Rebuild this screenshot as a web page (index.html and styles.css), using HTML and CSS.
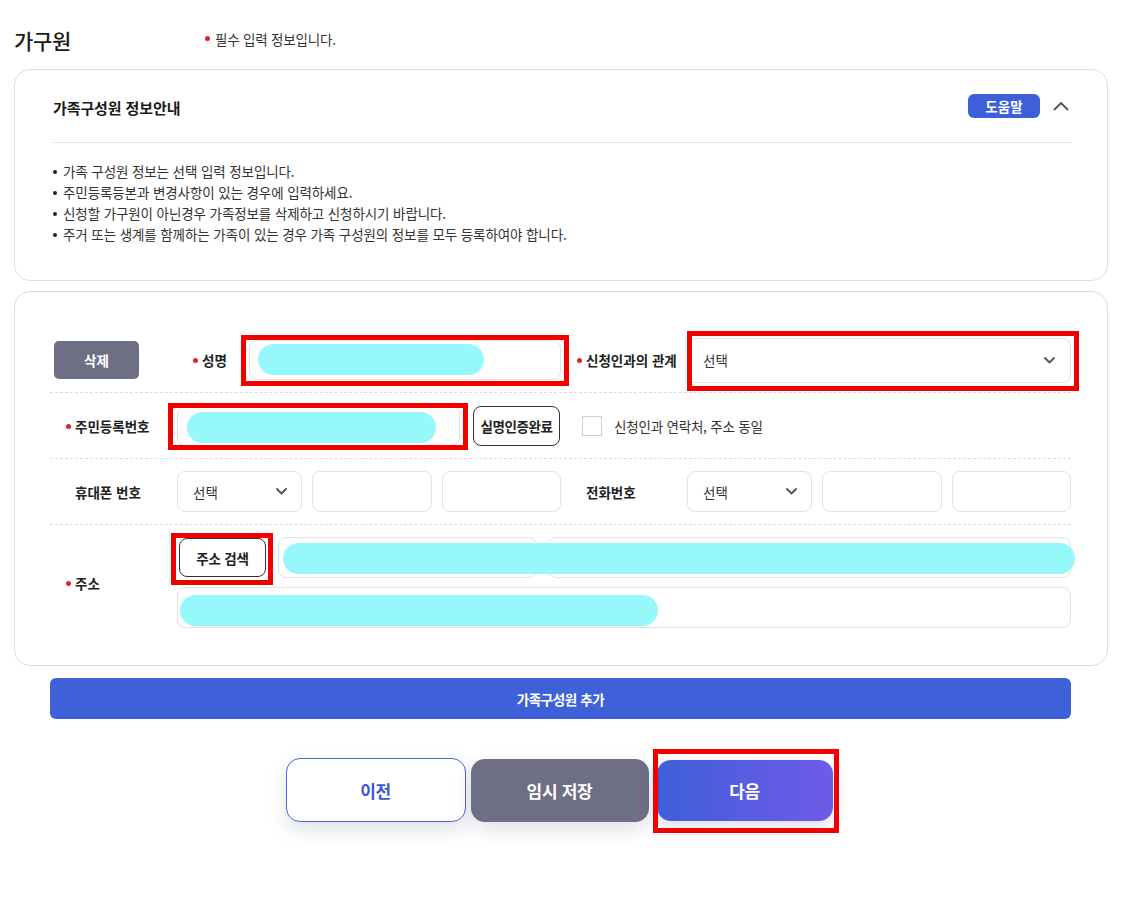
FILE: index.html
```html
<!DOCTYPE html>
<html lang="ko">
<head>
<meta charset="utf-8">
<title>가구원</title>
<link rel="stylesheet" href="styles.css">
</head>
<body>
<div class="page">
  <div class="title-row">
    <h2 class="title">가구원</h2>
    <p class="req-note"><span class="dot"></span>필수 입력 정보입니다.</p>
  </div>

  <section class="card info">
    <div class="info-head">
      <h3 class="info-title">가족구성원 정보안내</h3>
      <div class="info-tools">
        <span class="badge">도움말</span>
        <svg class="chev-up" width="16" height="10" viewBox="0 0 16 10"><polyline points="1.5,8.5 8,2 14.5,8.5" fill="none" stroke="#555" stroke-width="1.8" stroke-linecap="round" stroke-linejoin="round"/></svg>
      </div>
    </div>
    <ul class="info-list">
      <li>가족 구성원 정보는 선택 입력 정보입니다.</li>
      <li>주민등록등본과 변경사항이 있는 경우에 입력하세요.</li>
      <li>신청할 가구원이 아닌경우 가족정보를 삭제하고 신청하시기 바랍니다.</li>
      <li>주거 또는 생계를 함께하는 가족이 있는 경우 가족 구성원의 정보를 모두 등록하여야 합니다.</li>
    </ul>
  </section>

  <section class="card form">
    <div class="row">
      <div class="cell"><button class="btn-del">삭제</button></div>
      <div class="cell name-cell">
        <span class="lbl req name-lbl">성명</span>
        <div class="input name-input"><span class="mark mark-name"></span><span class="redact redact-name"></span></div>
      </div>
      <div class="cell"><span class="lbl req">신청인과의 관계</span></div>
      <div class="cell">
        <div class="select rel-select"><span class="mark mark-rel"></span><span>선택</span>
          <svg width="11" height="7" viewBox="0 0 11 7"><polyline points="1,1 5.5,5.5 10,1" fill="none" stroke="#555" stroke-width="1.8" stroke-linecap="round" stroke-linejoin="round"/></svg>
        </div>
      </div>
    </div>

    <div class="row">
      <div class="cell"><span class="lbl req">주민등록번호</span></div>
      <div class="cell rrn-cell">
        <div class="input rrn-input"><span class="mark mark-rrn"></span><span class="redact redact-rrn"></span></div>
        <button class="btn-line btn-verify">실명인증완료</button>
      </div>
      <div class="cell same-cell">
        <span class="checkbox"></span>
        <span class="same-text">신청인과 연락처, 주소 동일</span>
      </div>
    </div>

    <div class="row">
      <div class="cell"><span class="lbl">휴대폰 번호</span></div>
      <div class="cell phone-cell">
        <div class="select"><span>선택</span>
          <svg width="11" height="7" viewBox="0 0 11 7"><polyline points="1,1 5.5,5.5 10,1" fill="none" stroke="#555" stroke-width="1.8" stroke-linecap="round" stroke-linejoin="round"/></svg>
        </div>
        <div class="input"></div>
        <div class="input"></div>
      </div>
      <div class="cell"><span class="lbl">전화번호</span></div>
      <div class="cell phone-cell">
        <div class="select"><span>선택</span>
          <svg width="11" height="7" viewBox="0 0 11 7"><polyline points="1,1 5.5,5.5 10,1" fill="none" stroke="#555" stroke-width="1.8" stroke-linecap="round" stroke-linejoin="round"/></svg>
        </div>
        <div class="input"></div>
        <div class="input"></div>
      </div>
    </div>

    <div class="row row-addr">
      <div class="cell"><span class="lbl req">주소</span></div>
      <div class="cell addr-cell">
        <div class="addr-line">
          <button class="btn-line btn-search">주소 검색<span class="mark mark-search"></span></button>
          <div class="input addr-zip"></div>
          <div class="input addr-main"></div>
          <span class="redact redact-addr1"></span>
        </div>
        <div class="addr-line">
          <div class="input addr-detail"></div>
          <span class="redact redact-addr2"></span>
        </div>
      </div>
    </div>
  </section>

  <button class="btn-add">가족구성원 추가</button>

  <div class="actions">
    <button class="btn-prev">이전</button>
    <button class="btn-save">임시 저장</button>
    <button class="btn-next">다음<span class="mark mark-next"></span></button>
  </div>
</div>
</body>
</html>
```

FILE: styles.css
```css
* { box-sizing: border-box; }

body {
  margin: 0;
  background: #fff;
  font-family: "Noto Sans CJK KR", "Noto Sans", sans-serif;
  color: #222;
}

button {
  font-family: inherit;
  cursor: pointer;
}

.page {
  margin: 0 13px 0 14px;
  padding-bottom: 60px;
}

/* title */
.title-row {
  display: flex;
  align-items: center;
  height: 54px;
  padding-top: 26px;
  margin-bottom: 15px;
}

.title {
  flex: 0 0 191px;
  margin: 0;
  font-size: 21px;
  font-weight: 500;
  line-height: 28px;
  letter-spacing: -0.3px;
  color: #1a1a1a;
}

.req-note {
  margin: -3px 0 0;
  display: flex;
  align-items: center;
  font-size: 13.5px;
  letter-spacing: -0.2px;
  color: #333;
}

.dot {
  width: 5px;
  height: 5px;
  border-radius: 50%;
  background: #e3222f;
  margin-right: 5px;
}

/* cards */
.card {
  border: 1px solid #dedede;
  border-radius: 16px;
  background: #fff;
}

.info {
  padding: 0 36px 35px 38px;
}

.info-head {
  height: 73px;
  display: flex;
  align-items: center;
  justify-content: space-between;
  border-bottom: 1px solid #e3e3e3;
}

.info-title {
  margin: 0;
  padding-top: 3px;
  font-size: 15px;
  font-weight: 700;
  letter-spacing: -0.1px;
  color: #1a1a1a;
}

.info-tools {
  display: flex;
  align-items: center;
  gap: 13px;
  padding-bottom: 1px;
}

.badge {
  width: 72px;
  height: 24px;
  border-radius: 6px;
  background: #3d5fd9;
  color: #fff;
  font-size: 13.5px;
  font-weight: 700;
  display: flex;
  align-items: center;
  justify-content: center;
}

.chev-up {
  display: block;
  margin-right: 2px;
}

.info-list {
  list-style: none;
  margin: 18px 0 0;
  padding: 0;
}

.info-list li {
  position: relative;
  padding-left: 10px;
  font-size: 13.5px;
  line-height: 21px;
  letter-spacing: -0.1px;
  color: #333;
}

.info-list li::before {
  content: "";
  position: absolute;
  left: 0;
  top: 9px;
  width: 4px;
  height: 4px;
  border-radius: 50%;
  background: #222;
}

/* form card */
.form {
  margin-top: 10px;
  padding: 35px 36px 25px 35px;
}

.row {
  display: grid;
  grid-template-columns: 127px 384px 126px 384px;
  align-items: center;
  height: 66px;
  border-bottom: 1px dashed #dcdcdc;
}

.row-addr {
  height: auto;
  border-bottom: 0;
  padding: 12px 0;
}

.cell {
  display: flex;
  align-items: center;
  height: 100%;
}

.lbl {
  position: relative;
  padding-left: 25px;
  font-size: 13.5px;
  font-weight: 700;
  letter-spacing: 0;
  color: #222;
  white-space: nowrap;
}

.lbl.req::before {
  content: "";
  position: absolute;
  left: 16px;
  top: 50%;
  margin-top: -2px;
  width: 5px;
  height: 5px;
  border-radius: 50%;
  background: #e3222f;
}

.btn-del {
  margin-left: 4px;
  width: 85px;
  height: 38px;
  border: 0;
  border-radius: 5px;
  background: #6e6f84;
  color: #fff;
  font-size: 13.5px;
  font-weight: 700;
}

.name-lbl {
  flex: 0 0 72px;
}

.input {
  position: relative;
  height: 41px;
  border: 1px solid #e2e2e2;
  border-radius: 8px;
  background: #fff;
}

.name-input {
  flex: 1;
  height: 40px;
  margin-top: 1px;
}

.select {
  position: relative;
  height: 41px;
  border: 1px solid #e2e2e2;
  border-radius: 8px;
  background: #fff;
  display: flex;
  align-items: center;
  justify-content: space-between;
  padding: 0 14px 0 15px;
  font-size: 13.5px;
  color: #333;
}

.rel-select {
  flex: 1;
  height: 45px;
  margin-top: 1px;
  padding-right: 15px;
}

/* row 2 */
.rrn-cell {
  gap: 13px;
}

.rrn-input {
  width: 283px;
  height: 40px;
  margin-top: 1px;
}

.btn-line {
  position: relative;
  border: 1px solid #333;
  border-radius: 8px;
  background: #fff;
  color: #222;
  font-size: 13.5px;
  font-weight: 700;
  letter-spacing: -0.4px;
  padding: 0;
}

.btn-verify {
  width: 87px;
  height: 40px;
  margin-top: 1px;
}

.same-cell {
  grid-column: 3 / 5;
  padding-left: 21px;
  gap: 12px;
}

.checkbox {
  width: 20px;
  height: 20px;
  border: 1px solid #cfcfd6;
  background: #fff;
}

.same-text {
  font-size: 13.5px;
  letter-spacing: -0.2px;
  color: #333;
}

/* row 3 */
.phone-cell {
  display: grid;
  grid-template-columns: 125px 1fr 1fr;
  gap: 10px;
  align-content: center;
}

/* row 4 */
.addr-cell {
  grid-column: 2 / 5;
  flex-direction: column;
  align-items: stretch;
  gap: 9px;
}

.addr-line {
  position: relative;
  display: flex;
  align-items: center;
  height: 41px;
}

.btn-search {
  margin-left: 2px;
  width: 87px;
  height: 39px;
  letter-spacing: -0.2px;
}

.addr-zip {
  margin-left: 12px;
  width: 259px;
}

.addr-main {
  margin-left: 11px;
  flex: 1;
}

.addr-detail {
  flex: 1;
}

/* redaction overlays */
.redact {
  position: absolute;
  background: #97f8fc;
  border-radius: 16px;
  pointer-events: none;
}

.redact-name { left: 8px; top: 3px; width: 226px; height: 31px; }
.redact-rrn { left: 9px; top: 5px; width: 249px; height: 31px; }
.redact-addr1 { left: 106px; right: -4px; top: 6px; height: 31px; }
.redact-addr2 { left: 3px; top: 8px; width: 478px; height: 31px; }

/* red annotation boxes */
.mark {
  position: absolute;
  border: 5px solid #f20000;
  pointer-events: none;
}

.mark-name { top: -6px; right: -9px; bottom: -7px; left: -9px; }
.mark-rel { top: -8px; right: -9px; bottom: -9px; left: -1px; }
.mark-rrn { top: -4px; right: -9px; bottom: -5px; left: -10px; }
.mark-search { top: -6px; right: -8px; bottom: -9px; left: -9px; }
.mark-next { top: -11px; right: -6px; bottom: -12px; left: -4px; }

/* add button */
.btn-add {
  display: block;
  margin: 12px 0 0 36px;
  width: 1021px;
  height: 41px;
  border: 0;
  border-radius: 6px;
  background: #3e61d8;
  color: #fff;
  font-size: 13.5px;
  font-weight: 700;
  letter-spacing: -0.4px;
}

/* action buttons */
.actions {
  display: flex;
  align-items: center;
  justify-content: center;
  margin-top: 39px;
  padding-right: 4px;
}

.actions button {
  border: 0;
  font-size: 17px;
  font-weight: 700;
  letter-spacing: -0.3px;
  border-radius: 14px;
}

.btn-prev {
  width: 180px;
  height: 64px;
  background: #fff;
  border: 1px solid #4a63e0 !important;
  color: #3a56d4;
  box-shadow: 0 8px 20px rgba(30, 30, 60, 0.13);
}

.btn-save {
  margin-left: 5px;
  width: 178px;
  height: 63px;
  background: #6e6f84;
  color: #fff;
  box-shadow: 0 8px 20px rgba(30, 30, 60, 0.13);
}

.btn-next {
  position: relative;
  margin-left: 8px;
  width: 176px;
  height: 61px;
  background: linear-gradient(90deg, #3f5fd8 0%, #705ae9 100%);
  color: #fff;
  box-shadow: 0 7px 16px rgba(80, 80, 200, 0.18);
}
```
